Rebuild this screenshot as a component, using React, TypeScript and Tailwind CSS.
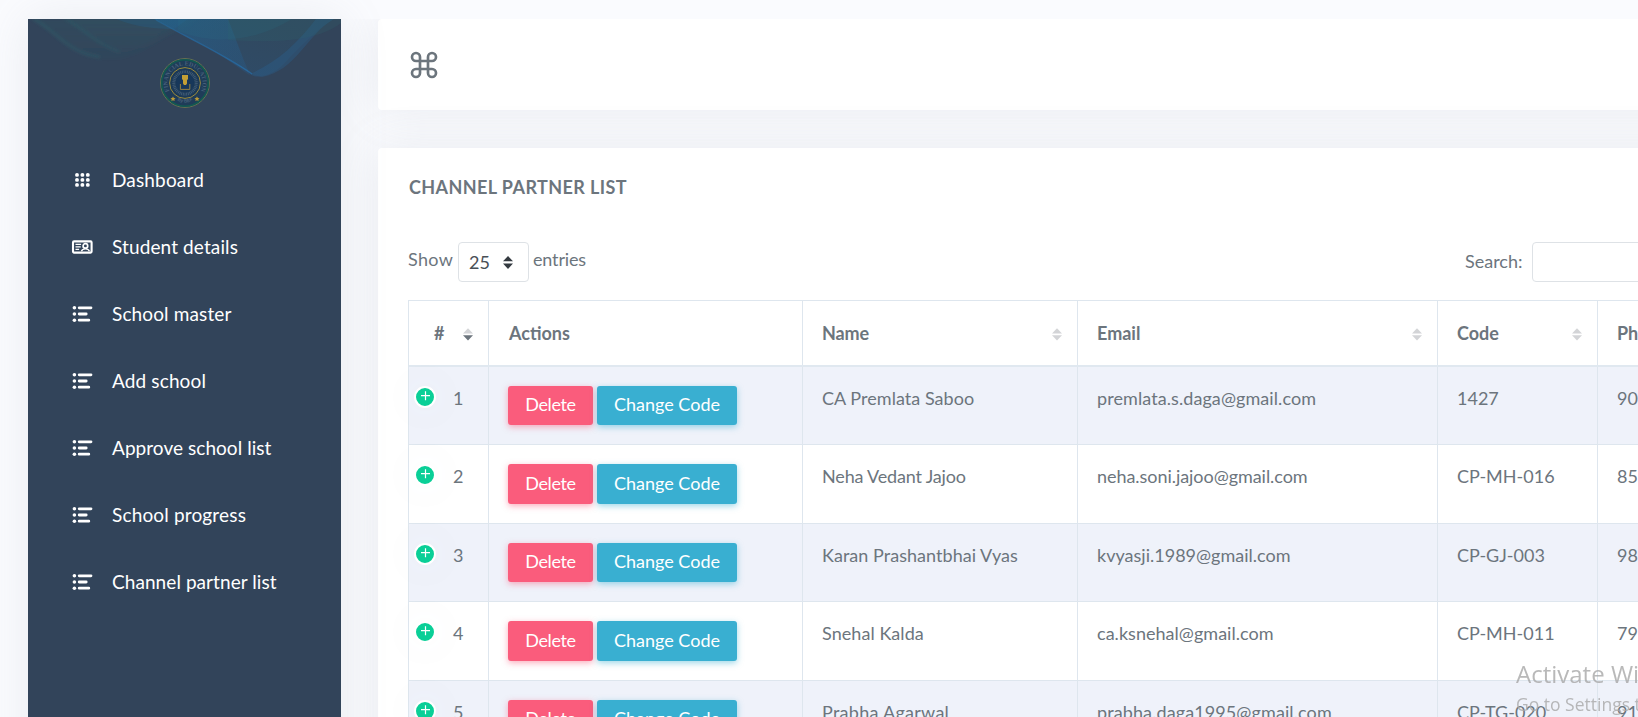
import React from "react";

type Row = { id: number; name: string; nameCls: string; email: string; emailCls: string; code: string; phone: string };

const rows: Row[] = [
  { id: 1, name: "CA Premlata Saboo", nameCls: "tracking-[0.04px]", email: "premlata.s.daga@gmail.com", emailCls: "tracking-[0.08px]", code: "1427", phone: "90" },
  { id: 2, name: "Neha Vedant Jajoo", nameCls: "tracking-[-0.17px]", email: "neha.soni.jajoo@gmail.com", emailCls: "tracking-[-0.05px]", code: "CP-MH-016", phone: "85" },
  { id: 3, name: "Karan Prashantbhai Vyas", nameCls: "tracking-[0.04px]", email: "kvyasji.1989@gmail.com", emailCls: "tracking-[0.01px]", code: "CP-GJ-003", phone: "98" },
  { id: 4, name: "Snehal Kalda", nameCls: "tracking-[0.06px]", email: "ca.ksnehal@gmail.com", emailCls: "tracking-[0.03px]", code: "CP-MH-011", phone: "79" },
  { id: 5, name: "Prabha Agarwal", nameCls: "tracking-[0.27px]", email: "prabha.daga1995@gmail.com", emailCls: "tracking-[0.1px]", code: "CP-TG-020", phone: "91" },
];

function DotsIcon() {
  return (
    <svg viewBox="0 0 22 22" className="h-[22px] w-[22px] fill-white">
      {[5.9, 10.9, 15.9].map((y) => [6, 11.4, 16.8].map((x) => <circle key={`${x}-${y}`} cx={x} cy={y} r="1.95" />))}
    </svg>
  );
}

function CardIcon() {
  return (
    <svg viewBox="0 0 22 22" className="h-[22px] w-[22px]" fill="none" stroke="#fff">
      <rect x="2" y="5.4" width="18.6" height="11.2" rx="1" strokeWidth="2.1" />
      <path d="M4.5 8.4h5.6M4.5 10.9h5.2M4.5 13.4h3.6" strokeWidth="1.4" />
      <circle cx="14.4" cy="9.9" r="2.3" strokeWidth="1.7" />
      <path d="M10.4 15.2c.6-1.6 2-2.4 4-2.4s3.4.8 4 2.4" strokeWidth="1.3" />
    </svg>
  );
}

function ListIcon() {
  return (
    <svg viewBox="0 0 22 22" className="h-[22px] w-[22px]" fill="none" stroke="#fff" strokeWidth="2.8" strokeLinecap="round">
      <path d="M8.2 4.8H20M8.2 11H15.2M8.2 17.2H17.8" />
      <g fill="#fff" stroke="none">
        <circle cx="3.4" cy="4.8" r="1.8" />
        <circle cx="3.4" cy="11" r="1.8" />
        <circle cx="3.4" cy="17.2" r="1.8" />
      </g>
    </svg>
  );
}

const nav = [
  { label: "Dashboard", cls: "tracking-[0.16px]", Icon: DotsIcon },
  { label: "Student details", cls: "tracking-[0.12px]", Icon: CardIcon },
  { label: "School master", cls: "tracking-[0.13px]", Icon: ListIcon },
  { label: "Add school", cls: "tracking-[0.13px]", Icon: ListIcon },
  { label: "Approve school list", cls: "tracking-[0.05px]", Icon: ListIcon },
  { label: "School progress", cls: "tracking-[0.16px]", Icon: ListIcon },
  { label: "Channel partner list", cls: "tracking-[0.07px]", Icon: ListIcon },
];

function Waves() {
  return (
    <svg viewBox="0 0 313 70" className="absolute left-0 top-0 h-[70px] w-[313px]">
      <defs>
        <linearGradient id="teal" x1="0" y1="0" x2="0" y2="1">
          <stop offset="0" stopColor="#2c6068" stopOpacity=".4" />
          <stop offset="1" stopColor="#2c6068" stopOpacity=".08" />
        </linearGradient>
        <linearGradient id="blue" x1="0" y1="0" x2="1" y2="1">
          <stop offset="0" stopColor="#1f6496" stopOpacity=".75" />
          <stop offset="1" stopColor="#25639b" stopOpacity=".35" />
        </linearGradient>
        <linearGradient id="sweep" x1="0" y1="1" x2="1" y2="0">
          <stop offset="0" stopColor="#23629a" stopOpacity=".5" />
          <stop offset="1" stopColor="#2a6a80" stopOpacity=".2" />
        </linearGradient>
        <linearGradient id="edge" x1="0" y1="0" x2="1" y2="1">
          <stop offset="0" stopColor="#2373b3" stopOpacity=".3" />
          <stop offset="1" stopColor="#2373b3" stopOpacity=".7" />
        </linearGradient>
        <filter id="soft" x="-10%" y="-20%" width="120%" height="140%">
          <feGaussianBlur stdDeviation="1.6" />
        </filter>
      </defs>
      <g filter="url(#soft)">
        <path d="M2 0C30 14 46 38 78 41C112 42 132 16 160 8L170 0Z" fill="url(#teal)" opacity=".45" />
        <path d="M6 0C30 14 40 34 72 38" stroke="#2b6870" strokeOpacity=".35" strokeWidth="3" fill="none" />
        <path d="M36 0C58 14 74 31 98 33C116 30 130 14 148 8L160 0Z" fill="url(#teal)" opacity=".4" />
        <path d="M38 0C58 12 70 26 92 33" stroke="#2b6870" strokeOpacity=".3" strokeWidth="2.5" fill="none" />
      </g>
      <path d="M88 0C108 8 128 10 146 10L160 0Z" fill="#245f86" opacity=".35" />
      <path d="M126 0C144 9 160 20 178 28C198 38 214 52 222 56C214 38 208 20 200 0Z" fill="url(#blue)" opacity=".65" />
      <path d="M126 0C150 14 190 32 226 56C240 60 252 50 262 38C280 20 292 8 306 0Z" fill="url(#sweep)" opacity=".5" />
      <path d="M128 1C150 14 194 34 224 55" stroke="url(#edge)" strokeWidth="1.3" fill="none" />
      <path d="M222 55C248 44 270 24 288 0H306C280 14 268 52 234 58C228 58 224 57 222 55Z" fill="#27689c" opacity=".3" />
      <path d="M150 12C190 28 232 20 264 0H150Z" fill="#2a6c86" opacity=".2" />
      <path d="M200 21C250 24 290 22 313 4V0H200Z" fill="#2d6870" opacity=".2" />
    </svg>
  );
}

function Seal() {
  return (
    <svg viewBox="0 0 52 52" className="relative h-[52px] w-[52px]">
      <defs>
        <path id="ring" d="M11.4 35.9A17.6 17.6 0 1 1 40.6 35.9" />
        <path id="foot" d="M14 40.5Q26 50.5 38 40.5" />
      </defs>
      <circle cx="26" cy="26" r="24.4" fill="#1f3c58" stroke="#6d7550" strokeWidth="1" />
      <circle cx="26" cy="26" r="23.2" fill="none" stroke="#125a51" strokeWidth="1.6" />
      <text className="fill-[#47607a] font-['Liberation_Serif'] text-[6px] font-bold">
        <textPath href="#ring" startOffset="50%" textAnchor="middle">FINANCIAL EDUCATION</textPath>
      </text>
      <circle cx="26" cy="26" r="15.4" fill="#1b3957" stroke="#9a8a3c" strokeWidth="1" />
      <circle cx="26" cy="26" r="11.2" fill="none" stroke="#405a74" strokeWidth="3" strokeDasharray="1 .7" />
      <circle cx="26" cy="25.6" r="9" fill="#17375a" />
      <path d="M23 18h6v4l-1 1.2v3.4l-1 1.4h-2l-1-1.4v-3.4L23 22z" fill="#c39f35" />
      <path d="M21.4 27v5.4h9.4V27" fill="none" stroke="#a58a3c" strokeWidth=".9" />
      <path d="M14 39.4l.9 1.5 1.7.3-1.3 1.1.3 1.7-1.6-.8-1.6.8.3-1.7-1.3-1.1 1.7-.3zM38 39.4l.9 1.5 1.7.3-1.3 1.1.3 1.7-1.6-.8-1.6.8.3-1.7-1.3-1.1 1.7-.3z" fill="#bb9a37" />
      <text className="fill-[#47607a] font-['Liberation_Sans'] text-[4.6px] font-bold">
        <textPath href="#foot" startOffset="50%" textAnchor="middle">By BEF</textPath>
      </text>
    </svg>
  );
}

function SortIcon({ up = "#d3d4d7", down = "#d3d4d7" }: { up?: string; down?: string }) {
  return (
    <svg viewBox="0 0 10 13" className="mt-[3px] h-[13px] w-[10px]">
      <path d="M5 .2L10 5.4H0z" fill={up} />
      <path d="M5 12.6L10 7.2H0z" fill={down} />
    </svg>
  );
}

function HeadCell({ label, cls = "", sort = true }: { label: string; cls?: string; sort?: boolean }) {
  return (
    <div className="flex items-center justify-between border-r border-[#dee6ee] pl-[19px] pr-[15px]">
      <span className={cls}>{label}</span>
      {sort && <SortIcon />}
    </div>
  );
}

const cols = "grid grid-cols-[80px_314px_275px_360px_160px_200px]";
const cell = "border-r border-[#dee6ee] pl-[19px] pt-[18px]";
const button = "flex items-center justify-center rounded-[3px] text-white";

export default function App() {
  return (
    <div className="relative flex h-[717px] w-full overflow-hidden bg-[#fafbfe] pl-[28px] pt-[19px] font-['Lato',sans-serif] text-[18px] leading-[27px] text-[#6c757d]">
      <aside className="relative h-[760px] w-[313px] shrink-0 bg-[#32445a] shadow-[0_0_45px_0_rgba(140,146,160,0.15)]">
        <Waves />
        <div className="flex justify-center pt-[38px]">
          <Seal />
        </div>
        <nav className="mt-[37px] flex flex-col text-[19px] text-white">
          {nav.map(({ label, cls, Icon }) => (
            <a key={label} className="flex h-[67px] items-center gap-[19px] pl-[43px]">
              <span className="mt-px"><Icon /></span>
              <span className={cls}>{label}</span>
            </a>
          ))}
        </nav>
      </aside>

      <main className="flex h-[698px] min-w-0 flex-1 flex-col overflow-hidden pl-[37px]">
        <header className="flex h-[91px] w-[1400px] shrink-0 items-center rounded-[4px] bg-white pl-[30px] shadow-[0_0_45px_0_rgba(140,146,160,0.15)]">
          <svg viewBox="0 0 24 24" className="mt-px h-[32px] w-[32px]" fill="none" stroke="#6c757d" strokeWidth="2">
            <path d="M15 6v12a3 3 0 1 0 3-3H6a3 3 0 1 0 3 3V6a3 3 0 1 0-3 3h12a3 3 0 1 0-3-3" />
          </svg>
        </header>

        <section className="mt-[38px] h-[800px] w-[1400px] shrink-0 rounded-[4px] bg-white pl-[30px] pt-[26px] shadow-[0_0_45px_0_rgba(140,146,160,0.15)]">
          <h4 className="pl-px text-[18px] font-bold tracking-[0.41px]">CHANNEL PARTNER LIST</h4>

          <div className="mt-[41px] flex h-[40px] items-start">
            <span className="mt-[4px] w-[50px] tracking-[0.3px]">Show</span>
            <div className="flex h-[40px] w-[71px] items-center justify-between rounded-[4px] border border-[#dee2e6] pl-[10px] pr-[15px] text-[#495057]">
              <span>25</span>
              <svg viewBox="0 0 10 13" className="h-[13px] w-[10px] fill-[#343a40]">
                <path d="M5 0L10 5.2H0zM5 13L10 7.4H0z" />
              </svg>
            </div>
            <span className="ml-[4px] mt-[4px] tracking-[-0.15px]">entries</span>
            <span className="ml-[879px] mt-[6px] w-[67px]">Search:</span>
            <div className="h-[40px] w-[200px] rounded-[4px] border border-[#dee2e6]" />
          </div>

          <div className="mt-[18px] border-l border-t border-[#dee6ee]">
            <div className={`${cols} h-[66px] border-b-2 border-[#e0e8f0] font-bold`}>
              <div className="flex items-center justify-between border-r border-[#dee6ee] pl-[25px] pr-[15px]">
                <span>#</span>
                <SortIcon down="#6c757d" />
              </div>
              <HeadCell label="Actions" cls="ml-px" sort={false} />
              <HeadCell label="Name" cls="tracking-[-0.1px]" />
              <HeadCell label="Email" />
              <HeadCell label="Code" />
              <HeadCell label="Ph" sort={false} />
            </div>

            {rows.map((r) => (
              <div key={r.id} className={`${cols} border-b border-[#dee6ee] ${r.id % 2 ? "h-[78px] bg-[#eff2fa]" : "h-[79px] bg-white"}`}>
                <div className="flex border-r border-[#dee6ee] pl-[5px]">
                  <span className="mt-[19px] flex h-[22px] w-[22px] items-center justify-center rounded-full border-2 border-white bg-[#0acf97] shadow-[0_0_45px_0_rgba(130,136,150,0.08)]">
                    <svg viewBox="0 0 18 18" className="h-[18px] w-[18px]" fill="none" stroke="#fff" strokeWidth="1.2">
                      <path d="M9.5 3.2v9M5 7.7h9" />
                    </svg>
                  </span>
                  <span className="ml-[17px] mt-[18px]">{r.id}</span>
                </div>
                <div className="flex gap-[4px] border-r border-[#dee6ee] pl-[19px] pt-[19px]">
                  <button className={`${button} ${r.id % 2 ? "h-[39px] pb-[2px]" : "h-[40px] pb-px"} w-[85px] bg-[#fa5c7c] tracking-[-0.36px] shadow-[0_2px_6px_0_rgba(250,92,124,0.5)]`}>Delete</button>
                  <button className={`${button} ${r.id % 2 ? "h-[39px] pb-[2px]" : "h-[40px] pb-px"} w-[140px] bg-[#39afd1] shadow-[0_2px_6px_0_rgba(57,175,209,0.5)]`}>Change Code</button>
                </div>
                <div className={`${cell} ${r.nameCls}`}>{r.name}</div>
                <div className={`${cell} ${r.emailCls}`}>{r.email}</div>
                <div className={cell}>{r.code}</div>
                <div className={cell}>{r.phone}</div>
              </div>
            ))}
          </div>
        </section>
      </main>

      <div className="absolute left-[1516px] top-[657px] whitespace-nowrap font-['Open_Sans',sans-serif] text-[#a8a8a8] opacity-80">
        <div className="text-[24px] leading-[34px]">Activate Wi</div>
        <div className="text-[17.5px] leading-[26px]">Go to Settings t</div>
      </div>
    </div>
  );
}
